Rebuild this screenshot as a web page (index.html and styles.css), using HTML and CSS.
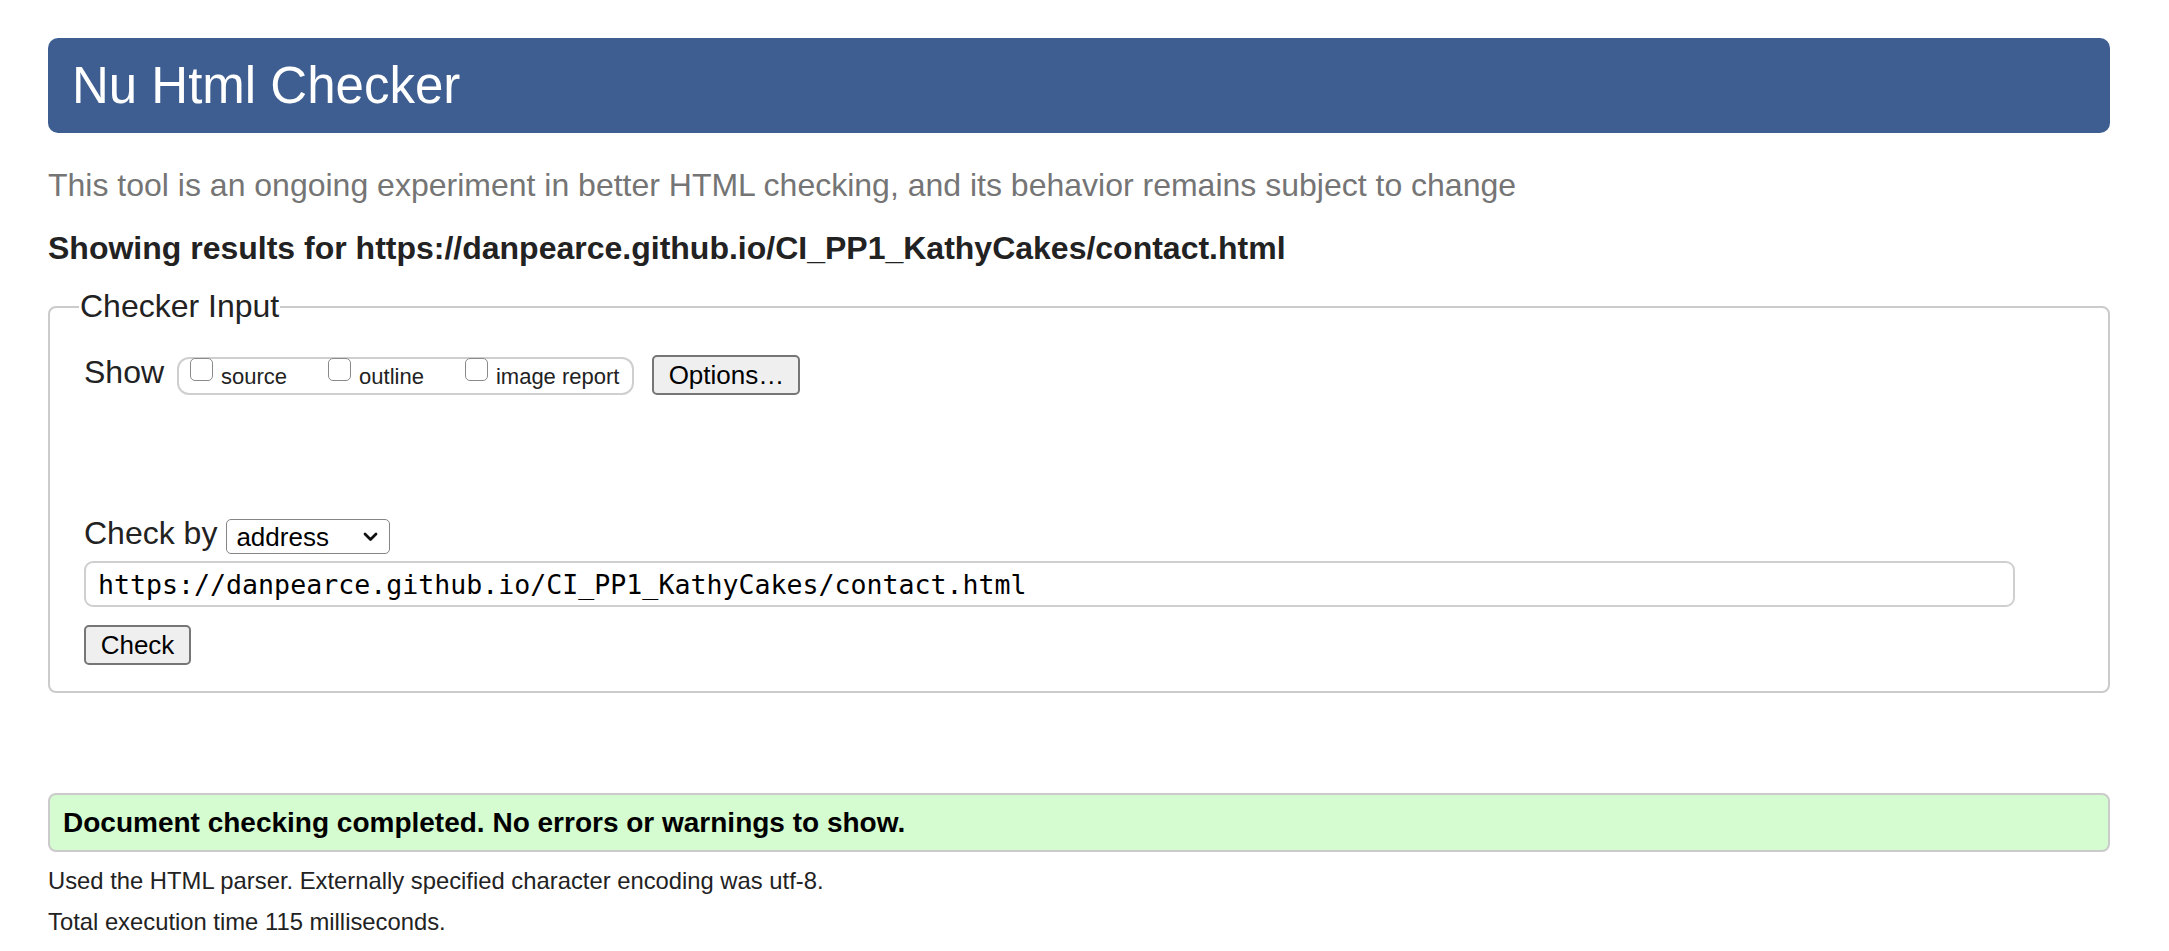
FILE: index.html
```html
<!DOCTYPE html>
<html lang="en">
<head>
<meta charset="utf-8">
<title>Nu Html Checker</title>
<link rel="stylesheet" href="styles.css">
</head>
<body>
<h1 class="title">Nu Html Checker</h1>
<p class="intro">This tool is an ongoing experiment in better HTML checking, and its behavior remains subject to change</p>
<p class="results-for">Showing results for https://danpearce.github.io/CI_PP1_KathyCakes/contact.html</p>
<form class="checker">
  <fieldset class="input-set">
    <legend class="legend">Checker Input</legend>
    <div class="show-row">
      <span class="show-label">Show</span>
      <span class="show-group">
        <label class="opt"><input type="checkbox" class="cb"><span class="opt-text">source</span></label>
        <label class="opt"><input type="checkbox" class="cb"><span class="opt-text">outline</span></label>
        <label class="opt opt-last"><input type="checkbox" class="cb"><span class="opt-text">image report</span></label>
      </span>
      <button type="button" class="btn btn-options">Options…</button>
    </div>
    <div class="checkby-row">
      <span class="checkby-label">Check by</span>
      <span class="select-wrap">
        <select class="select"><option>address</option></select>
        <svg class="chev" width="15" height="10" viewBox="0 0 15 10"><path d="M2 2 L7.5 7.5 L13 2" stroke="#111" stroke-width="2.8" fill="none" stroke-linecap="round" stroke-linejoin="round"/></svg>
      </span>
    </div>
    <input class="url" type="text" value="https://danpearce.github.io/CI_PP1_KathyCakes/contact.html">
    <div class="check-row"><button type="button" class="btn btn-check">Check</button></div>
  </fieldset>
</form>
<div class="success">Document checking completed. No errors or warnings to show.</div>
<p class="meta">Used the HTML parser. Externally specified character encoding was utf-8.</p>
<p class="meta meta-second">Total execution time 115 milliseconds.</p>
</body>
</html>
```
FILE: styles.css
```css
html, body {
  margin: 0;
}
body {
  font-family: "Liberation Sans", Arial, Helvetica, sans-serif;
  color: #222;
  background: #fff;
  padding: 38px 59px 0 48px;
}
.title {
  margin: 0;
  height: 95px;
  line-height: 95px;
  font-size: 51px;
  font-weight: normal;
  color: #fff;
  background: #3e5e91;
  border-radius: 10px;
  padding: 0 0 0 24px;
}
.intro {
  margin: 34px 0 0;
  font-size: 32px;
  line-height: 37px;
  color: #757575;
}
.results-for {
  margin: 26px 0 0;
  font-size: 32px;
  line-height: 37px;
  font-weight: bold;
  color: #222;
}
.checker {
  margin: 21px 0 0;
}
.input-set {
  margin: 0;
  border: 2px solid #cbcbcb;
  border-radius: 8px;
  padding: 25px 34px 26px 34px;
  min-inline-size: 0;
}
.legend {
  font-size: 32px;
  line-height: 37px;
  padding: 0 1px;
  margin-left: -5px;
  color: #222;
}
.show-row {
  display: flex;
  align-items: flex-start;
}
.show-label {
  font-size: 32px;
  line-height: 37px;
  margin-top: 4px;
}
.show-group {
  display: flex;
  align-items: flex-start;
  box-sizing: border-box;
  height: 38px;
  margin: 7px 0 0 13px;
  padding: 0 13px 0 11px;
  border: 2px solid #cfcfcf;
  border-radius: 12px;
}
.opt {
  display: flex;
  align-items: flex-start;
  margin-right: 41px;
}
.opt-last {
  margin-right: 0;
}
.cb {
  appearance: none;
  -webkit-appearance: none;
  box-sizing: border-box;
  width: 23px;
  height: 23px;
  margin: -1px 0 0 0;
  border: 1.5px solid #8a8a8a;
  border-radius: 5px;
  background: #fff;
}
.opt-text {
  font-size: 22px;
  line-height: 22px;
  margin: 7px 0 0 8px;
  color: #222;
}
.btn {
  box-sizing: border-box;
  height: 40px;
  background: #efefef;
  border: 2px solid #767676;
  border-radius: 5px;
  font-family: "Liberation Sans", Arial, Helvetica, sans-serif;
  font-size: 26px;
  color: #000;
  padding: 0;
}
.btn-options {
  width: 148px;
  margin: 5px 0 0 18px;
}
.checkby-row {
  display: flex;
  align-items: flex-start;
  margin-top: 120px;
}
.checkby-label {
  font-size: 32px;
  line-height: 37px;
}
.select-wrap {
  position: relative;
  display: inline-block;
  margin: 4px 0 0 9px;
}
.select {
  appearance: none;
  -webkit-appearance: none;
  box-sizing: border-box;
  width: 164px;
  height: 35px;
  border: 1.5px solid #858585;
  border-radius: 5px;
  background: #fff;
  font-family: "Liberation Sans", Arial, Helvetica, sans-serif;
  font-size: 26px;
  color: #000;
  padding: 0 0 0 9px;
  margin: 0;
  display: block;
}
.chev {
  position: absolute;
  right: 12px;
  top: 13px;
  pointer-events: none;
}
.url {
  display: block;
  box-sizing: border-box;
  width: 1931px;
  height: 46px;
  margin: 7px 0 0 0;
  border: 2px solid #cfcfcf;
  border-radius: 9px;
  padding: 0 0 0 12px;
  font-family: "DejaVu Sans Mono", "Liberation Mono", monospace;
  font-size: 26.6px;
  color: #000;
  background: #fff;
}
.check-row {
  margin-top: 18px;
}
.btn-check {
  width: 107px;
}
.success {
  box-sizing: border-box;
  height: 59px;
  margin-top: 100px;
  border: 2px solid #cbcbcb;
  border-radius: 8px;
  background: #d5fbd0;
  font-size: 28px;
  line-height: 55px;
  font-weight: bold;
  color: #000;
  padding-left: 13px;
}
.meta {
  margin: 15px 0 0;
  font-size: 23.8px;
  line-height: 28px;
  color: #222;
}
.meta-second {
  margin-top: 13px;
}
```
